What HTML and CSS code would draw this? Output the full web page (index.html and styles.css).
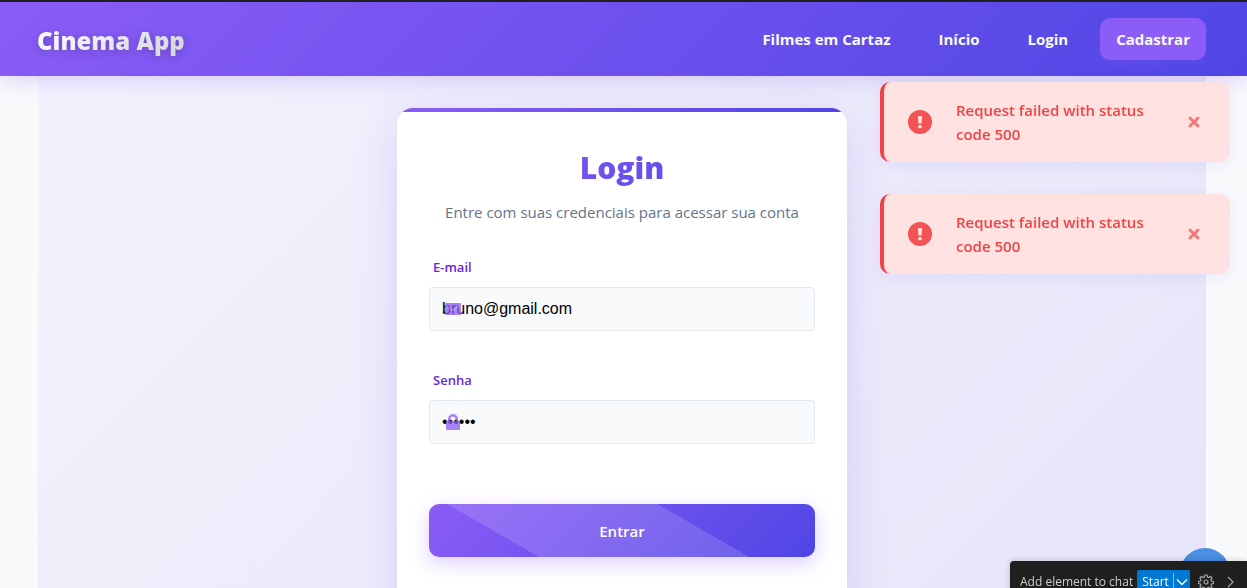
FILE: index.html
```html
<!DOCTYPE html>
<html lang="pt-BR">
<head>
  <meta charset="utf-8">
  <meta name="viewport" content="width=device-width, initial-scale=1">
  <title>Cinema App</title>
  <link rel="stylesheet" href="styles.css">
</head>
<body>
  <header class="header">
    <a class="brand" href="#">Cinema App</a>
    <nav class="nav">
      <a class="nav-link" href="#">Filmes em Cartaz</a>
      <a class="nav-link" href="#">Início</a>
      <a class="nav-link" href="#">Login</a>
      <a class="nav-link nav-cta" href="#">Cadastrar</a>
    </nav>
  </header>

  <main class="main">
    <form class="card">
      <h1 class="title">Login</h1>
      <p class="subtitle">Entre com suas credenciais para acessar sua conta</p>
      <div class="field">
        <label class="label" for="email">E-mail</label>
        <div class="control">
          <input class="input" id="email" type="email" value="bruno@gmail.com">
          <svg class="field-icon" viewBox="0 0 18 18" aria-hidden="true">
            <path fill="#8b5cf6" d="M2 3h14a1 1 0 0 1 1 1v10a1 1 0 0 1-1 1H2a1 1 0 0 1-1-1V4a1 1 0 0 1 1-1z"/>
            <path fill="none" stroke="#f8fafc" stroke-opacity="0.6" stroke-width="1" d="M2 5.500L7.500 9.500Q9 10.500 10.500 9.500L16 5.500"/>
          </svg>
        </div>
      </div>
      <div class="field">
        <label class="label" for="password">Senha</label>
        <div class="control">
          <input class="input" id="password" type="password" value="123456">
          <svg class="field-icon" viewBox="0 0 18 18" aria-hidden="true">
            <path fill="#8b5cf6" fill-rule="evenodd" d="M4 8V6a5 5 0 0 1 10 0v2h1a1 1 0 0 1 1 1v7a1 1 0 0 1-1 1H3a1 1 0 0 1-1-1V9a1 1 0 0 1 1-1zM6.500 8h5V6a2.500 2.500 0 0 0-5 0z"/>
          </svg>
        </div>
      </div>
      <button class="submit" type="submit">Entrar</button>
    </form>
  </main>

  <div class="toasts">
    <div class="toast" role="alert">
      <svg class="toast-icon" viewBox="0 0 24 24" aria-hidden="true">
        <circle cx="12" cy="12" r="12" fill="#f35353"/>
        <path fill="#fee2e2" d="M9.900 6h4.200l-.5 7.500h-3.200z"/>
        <circle cx="12" cy="16.600" r="1.900" fill="#fee2e2"/>
      </svg>
      <p class="toast-text">Request failed with status code 500</p>
      <button class="toast-close" type="button" aria-label="Fechar">
        <svg viewBox="0 0 12 12" aria-hidden="true"><path d="M2 2l8 8M10 2l-8 8"/></svg>
      </button>
    </div>
    <div class="toast" role="alert">
      <svg class="toast-icon" viewBox="0 0 24 24" aria-hidden="true">
        <circle cx="12" cy="12" r="12" fill="#f35353"/>
        <path fill="#fee2e2" d="M9.900 6h4.200l-.5 7.500h-3.200z"/>
        <circle cx="12" cy="16.600" r="1.900" fill="#fee2e2"/>
      </svg>
      <p class="toast-text">Request failed with status code 500</p>
      <button class="toast-close" type="button" aria-label="Fechar">
        <svg viewBox="0 0 12 12" aria-hidden="true"><path d="M2 2l8 8M10 2l-8 8"/></svg>
      </button>
    </div>
  </div>

  <div class="bubble"></div>
  <div class="picker">
    <span>Add element to chat</span>
    <div class="picker-start">
      <button class="picker-btn" type="button">Start</button>
      <button class="picker-more" type="button" aria-label="Mais opções">
        <svg viewBox="0 0 12 12" aria-hidden="true"><path d="M1 3.500l5 5 5-5"/></svg>
      </button>
    </div>
    <div class="picker-tools">
      <button class="picker-icon" type="button" aria-label="Configurações">
        <svg viewBox="0 0 16 16" aria-hidden="true">
          <circle cx="8" cy="8" r="2"/>
          <path d="M6.900 1h2.200l.4 2 1.300.6 1.800-1.200 1.500 1.600-1.200 1.700.5 1.300 2.100.4v2.200l-2.100.4-.5 1.200 1.200 1.800-1.600 1.500-1.700-1.200-1.300.5-.4 2.100H6.900l-.4-2.100-1.300-.5-1.700 1.200L1.900 13l1.200-1.800-.5-1.200-2.100-.4V7.400L2.600 7l.5-1.300L1.900 4l1.500-1.600 1.800 1.200L6.500 3z"/>
        </svg>
      </button>
      <button class="picker-icon" type="button" aria-label="Recolher">
        <svg viewBox="0 0 16 16" aria-hidden="true"><path d="M6 3l5 5-5 5"/></svg>
      </button>
    </div>
  </div>
</body>
</html>
```
FILE: styles.css
```css
* {
  box-sizing: border-box;
}

body {
  margin: 0;
  height: 100vh;
  overflow: hidden;
  display: flex;
  flex-direction: column;
  background: #f8fafc;
  font-family: "Open Sans", "Noto Sans", sans-serif;
  font-size: 15px;
  line-height: 24px;
}

button {
  font: inherit;
  border: 0;
  padding: 0;
  background: none;
  cursor: pointer;
}

.header {
  position: relative;
  z-index: 1;
  flex: none;
  display: flex;
  align-items: center;
  justify-content: space-between;
  padding: 16px 41px 16px 37px;
  border-top: 2px solid #1f1f1f;
  background: linear-gradient(135deg, #8b5cf6, #4f46e5) border-box;
  box-shadow: 0 4px 20px rgba(139, 92, 246, 0.25);
}

.brand {
  padding-top: 4px;
  font-size: 24px;
  font-weight: 800;
  line-height: 38px;
  text-decoration: none;
  color: transparent;
  background: linear-gradient(135deg, #ffffff, #d1d5db);
  background-clip: text;
  -webkit-background-clip: text;
  filter: drop-shadow(0 2px 4px rgba(0, 0, 0, 0.2));
}

.nav {
  display: flex;
  gap: 16px;
}

.nav-link {
  padding: 9px 16px;
  border-radius: 10px;
  color: #f8fafc;
  font-weight: 700;
  text-decoration: none;
}

.nav-cta {
  background: #8b5cf6;
  box-shadow: 0 4px 10px rgba(139, 92, 246, 0.2);
}

.main {
  flex: 1 0 auto;
  display: flex;
  justify-content: center;
  align-items: flex-start;
  margin: 0 41px 0 38px;
  padding-top: 32px;
  background: linear-gradient(135deg, #f3f2fc, #e6e4f8);
}

.card {
  position: relative;
  width: 450px;
  max-width: 100%;
  padding: 36px 32px 64px;
  overflow: hidden;
  border-radius: 16px;
  background: linear-gradient(90deg, #8b5cf6, #4f46e5) top / 100% 4px no-repeat #ffffff;
  box-shadow: 0 10px 40px rgba(139, 92, 246, 0.2);
}

.title {
  margin: 0 0 7px;
  font-size: 30px;
  font-weight: 800;
  line-height: 48px;
  text-align: center;
  color: transparent;
  background: linear-gradient(135deg, #8b5cf6, #4f46e5);
  background-clip: text;
  -webkit-background-clip: text;
}

.subtitle {
  margin: 0 0 32px;
  line-height: 26px;
  text-align: center;
  color: #64748b;
}

.field {
  margin-bottom: 39px;
}

.label {
  display: block;
  margin: 0 4px 9px;
  font-size: 13px;
  font-weight: 600;
  line-height: 21px;
  color: #6d28d9;
}

.control {
  position: relative;
}

.input {
  display: block;
  width: 100%;
  height: 44px;
  padding: 0 12px;
  border: 1px solid #e2e8f0;
  border-radius: 4px;
  background: #f8fafc;
  color: #000000;
  font-family: "Liberation Sans", Arial, sans-serif;
  font-size: 16px;
}

.field-icon {
  position: absolute;
  left: 15px;
  top: 13px;
  width: 18px;
  height: 18px;
  opacity: 0.75;
}

.submit {
  display: block;
  width: 100%;
  height: 53px;
  margin-top: 60px;
  border-radius: 10px;
  color: #ffffff;
  font-weight: 600;
  background:
    linear-gradient(30deg, transparent 23%, rgba(255, 255, 255, 0.14) 23%, rgba(255, 255, 255, 0.14) 67%, transparent 67%),
    linear-gradient(135deg, #8b5cf6, #4f46e5);
  box-shadow: 0 6px 20px rgba(139, 92, 246, 0.3);
}

.toasts {
  position: fixed;
  z-index: 2;
  top: 82px;
  right: 17px;
  width: 350px;
  display: grid;
  gap: 32px;
}

.toast {
  display: flex;
  align-items: center;
  gap: 24px;
  padding: 16px 30px 16px 24px;
  border-left: 4px solid #ef4444;
  border-radius: 10px;
  background: #fee2e2;
  box-shadow: 0 4px 15px rgba(139, 92, 246, 0.1);
  color: #ef4444;
}

.toast-icon {
  flex: none;
  width: 24px;
  height: 24px;
}

.toast-text {
  flex: 1;
  margin: 0;
  font-weight: 600;
}

.toast-close {
  display: flex;
}

.toast-close svg {
  width: 12px;
  height: 12px;
  fill: none;
  stroke: #f57777;
  stroke-width: 3;
  stroke-linecap: round;
}

.bubble {
  position: fixed;
  z-index: 2;
  right: 17px;
  bottom: -10px;
  width: 50px;
  height: 50px;
  border-radius: 50%;
  background: #4a90e2;
}

.picker {
  position: fixed;
  z-index: 3;
  right: 0;
  bottom: -15px;
  width: 237px;
  height: 42px;
  display: flex;
  align-items: center;
  gap: 4px;
  padding: 0 7px 0 10px;
  border-radius: 4px 0 0 4px;
  background: #1f1f1f;
  box-shadow: 0 0 6px rgba(0, 0, 0, 0.2);
  color: #cccccc;
  font-size: 12px;
  white-space: nowrap;
}

.picker-start {
  display: flex;
  align-items: center;
  border-radius: 2px;
  background: #0078d4;
  color: #ffffff;
}

.picker-btn {
  padding: 0 4px 0 5px;
  color: #ffffff;
}

.picker-more {
  display: flex;
  padding: 3px 2px;
  border-left: 1px solid #7fbbe9;
}

.picker svg {
  width: 12px;
  height: 12px;
  fill: none;
  stroke: #ffffff;
  stroke-width: 1.4;
}

.picker-tools {
  display: flex;
  gap: 8px;
  margin-left: 4px;
}

.picker-icon {
  display: flex;
}

.picker .picker-icon svg {
  width: 16px;
  height: 16px;
  stroke: #a5a5a5;
  stroke-width: 1.2;
}
```
